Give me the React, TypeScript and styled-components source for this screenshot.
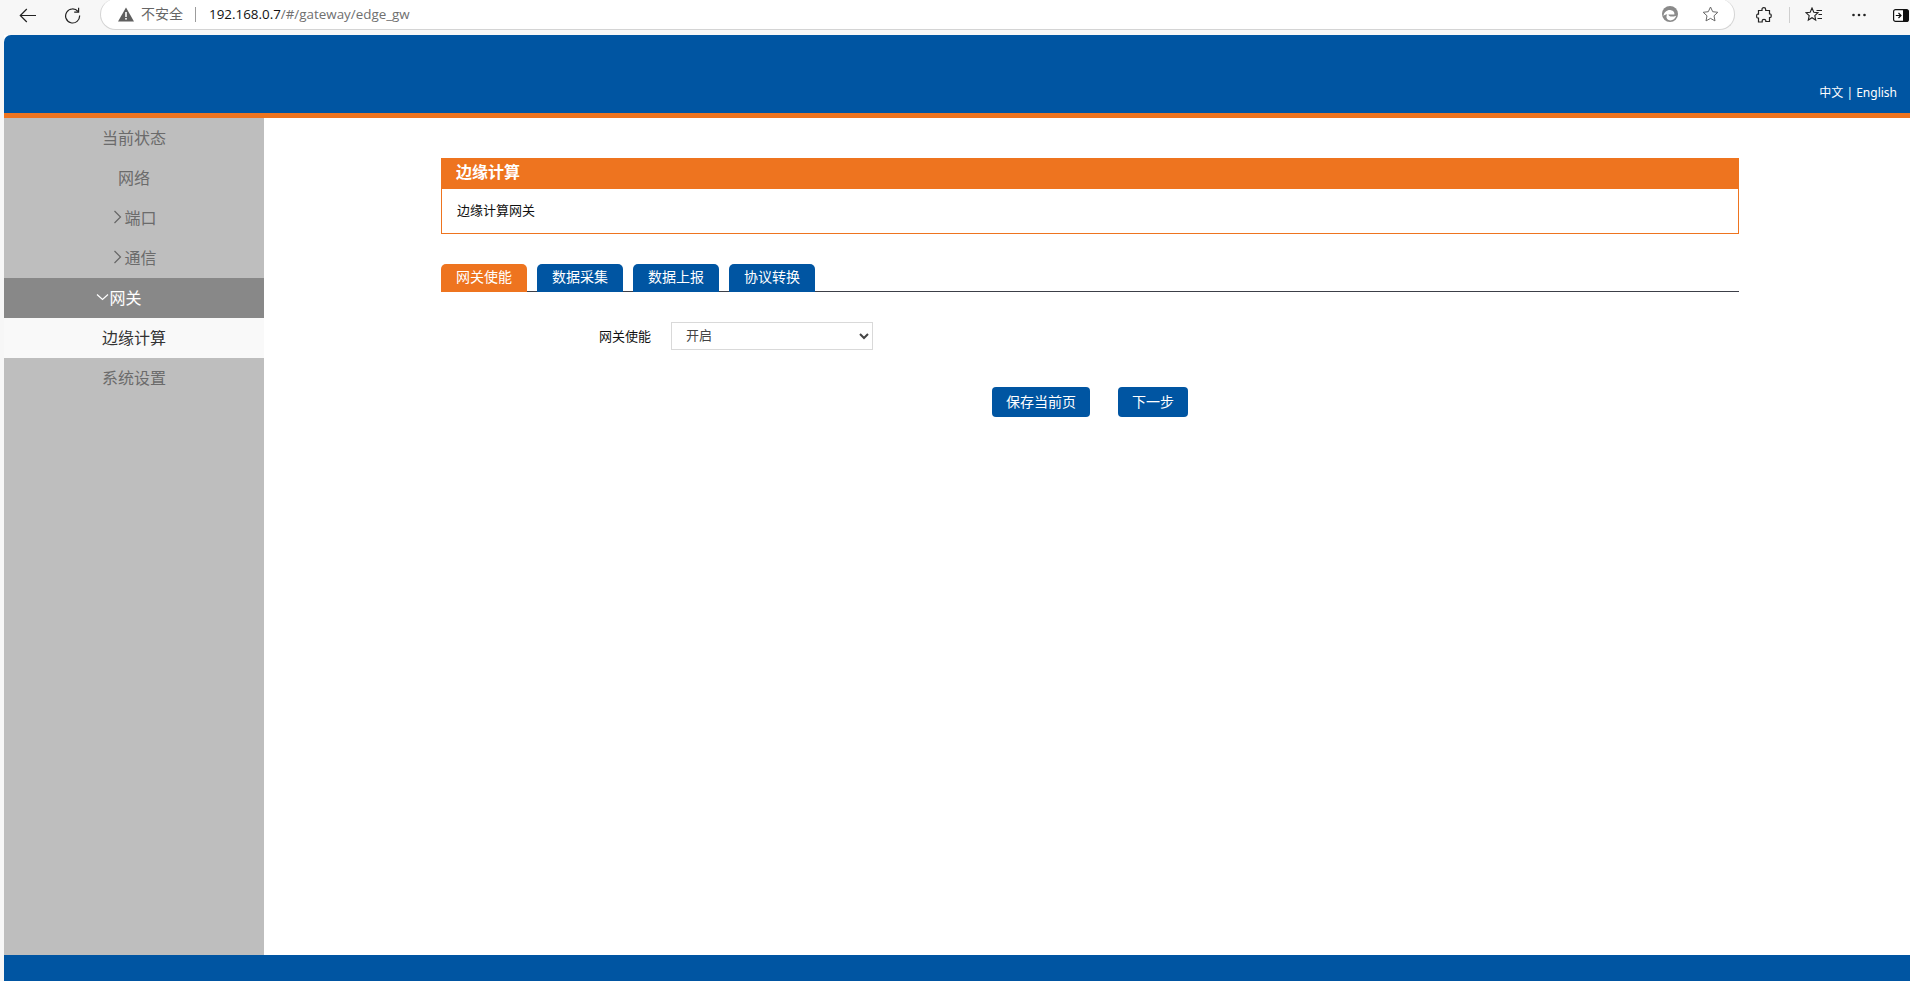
import React from 'react';
import styled, { createGlobalStyle } from 'styled-components';

const GlobalStyle = createGlobalStyle`
  html, body { margin: 0; padding: 0; height: 100%; background: #fff; }
  body { font-family: "Noto Sans", "Noto Sans CJK SC", sans-serif; overflow: hidden; }
  * { box-sizing: border-box; }
`;

const Viewport = styled.div`
  width: 1910px;
  height: 981px;
  display: flex;
  flex-direction: column;
  background: #f7f7f7;
  overflow: hidden;
`;

const BrowserBar = styled.div`
  height: 35px;
  flex: none;
  display: flex;
  align-items: flex-start;
  padding-left: 19px;
  background: #f7f7f7;
`;

const NavButton = styled.div<{ $w: number }>`
  width: ${p => p.$w}px;
  height: 30px;
  flex: none;
  display: flex;
  align-items: center;
  svg { display: block; }
`;

const AddressPill = styled.div`
  width: 1635px;
  height: 31px;
  margin-top: -1px;
  flex: none;
  display: flex;
  align-items: center;
  background: #fff;
  border: 1px solid #d4d4d4;
  border-top: none;
  border-radius: 16px;
  padding: 0 15px 0 17px;
  font-size: 13px;
`;

const Insecure = styled.span`
  color: #666;
  font-size: 14px;
  margin-left: 7px;
  margin-right: 1px;
  line-height: 18px;
`;

const Divider = styled.span`
  width: 1px;
  height: 15px;
  background: #9c9c9c;
  margin: 0 13px 0 11px;
`;

const Host = styled.span`
  color: #111;
  font-family: "Open Sans", sans-serif;
  font-size: 13.4px;
`;

const UrlPath = styled.span`
  color: #6f6f6f;
  font-family: "Open Sans", sans-serif;
  font-size: 13.4px;
`;

const PillEnd = styled.div`
  margin-left: auto;
  display: flex;
  align-items: center;
  gap: 24px;
  svg { display: block; }
`;

const Tools = styled.div`
  flex: none;
  height: 30px;
  display: flex;
  align-items: center;
  margin-left: 21px;
  svg { display: block; }
`;

const ToolSep = styled.span`
  width: 1px;
  height: 16px;
  background: #cfcfcf;
  margin: 0 15px 0 17px;
`;

const DotsSlot = styled.span`
  margin-left: 29px;
`;

const PaneSlot = styled.span`
  margin-left: 27px;
`;

const Page = styled.div`
  flex: 1;
  min-height: 0;
  margin-left: 4px;
  display: flex;
  flex-direction: column;
  background: #fff;
`;

const Header = styled.header`
  height: 83px;
  flex: none;
  display: flex;
  align-items: flex-end;
  justify-content: flex-end;
  padding: 0 13px 12px 0;
  background: #0055a2;
  border-bottom: 5px solid #ee741f;
  border-top-left-radius: 7px;
  color: #fff;
  font-size: 12px;
  line-height: 17px;
`;

const Body = styled.div`
  flex: 1;
  min-height: 0;
  display: flex;
`;

const Sidebar = styled.nav`
  width: 260px;
  flex: none;
  background: #bebebe;
`;

const NavRow = styled.div<{ $state?: 'open' | 'current' }>`
  height: 40px;
  display: flex;
  align-items: center;
  justify-content: center;
  padding-bottom: 2px;
  padding-right: ${p => (p.$state === 'open' ? 30 : 0)}px;
  font-size: 16px;
  color: ${p => (p.$state === 'open' ? '#fff' : p.$state === 'current' ? '#333' : '#6b6b6b')};
  background: ${p => (p.$state === 'open' ? '#888888' : p.$state === 'current' ? '#f9f9f9' : 'transparent')};
  svg { display: block; flex: none; }
`;

const Main = styled.main`
  flex: 1;
  min-width: 0;
  padding: 40px 171px 0 177px;
`;

const InfoBox = styled.section`
  border: 1px solid #ee741f;
  height: 76px;
`;

const InfoTitle = styled.h2`
  margin: 0;
  height: 30px;
  padding-left: 14px;
  background: #ee741f;
  color: #fff;
  font-size: 16px;
  font-weight: 700;
  line-height: 27px;
`;

const InfoText = styled.p`
  margin: 0;
  padding-left: 15px;
  font-size: 13px;
  line-height: 42px;
  color: #111;
`;

const TabBar = styled.div`
  margin-top: 30px;
  height: 28px;
  display: flex;
  gap: 10px;
  border-bottom: 1px solid #3c3f48;
`;

const Tab = styled.div<{ $active?: boolean }>`
  width: 86px;
  height: 28px;
  border-radius: 5px 5px 0 0;
  background: ${p => (p.$active ? '#ee741f' : '#0055a2')};
  color: #fff;
  font-size: 14px;
  line-height: 26px;
  text-align: center;
`;

const FormRow = styled.div`
  margin-top: 30px;
  display: flex;
  align-items: center;
  padding-left: 158px;
`;

const FieldLabel = styled.label`
  width: 52px;
  font-size: 13px;
  color: #111;
  margin-right: 20px;
  text-align: right;
  padding-bottom: 2px;
`;

const Select = styled.select`
  width: 202px;
  height: 28px;
  padding-left: 10px;
  padding-bottom: 2px;
  border: 1px solid #d9d9d9;
  border-radius: 0;
  background: #fff;
  color: #444;
  font-family: inherit;
  font-size: 13px;
  outline: none;
`;

const Actions = styled.div`
  margin-top: 37px;
  padding-left: 551px;
  display: flex;
  gap: 28px;
`;

const ActionButton = styled.button<{ $w: number }>`
  width: ${p => p.$w}px;
  height: 30px;
  padding: 0 0 2px;
  border: none;
  border-radius: 4px;
  background: #0055a2;
  color: #fff;
  font-family: inherit;
  font-size: 14px;
`;

const Footer = styled.footer`
  height: 26px;
  flex: none;
  background: #0055a2;
`;

const Chevron = ({ dir, color }: { dir: 'right' | 'down'; color: string }) => (
  <svg width="13" height="14" viewBox="0 0 13 14" fill="none" stroke={color} strokeWidth="1.2">
    {dir === 'right' ? <path d="M3.5 1 9.5 7l-6 6" /> : <path d="M1 4.5 6.5 9.5 12 4.5" />}
  </svg>
);

export default function App() {
  return (
    <Viewport>
      <GlobalStyle />
      <BrowserBar>
        <NavButton $w={45}>
          <svg width="17" height="15" viewBox="0 0 17 15" fill="none" stroke="#222" strokeWidth="1.2">
            <path d="M17 7.5H1.5M7.8 1 1.3 7.5 7.8 14" />
          </svg>
        </NavButton>
        <NavButton $w={36}>
          <svg width="17" height="17" viewBox="0 0 17 17" fill="none" stroke="#222" strokeWidth="1.2">
            <path d="M14 4.500A7 7 0 1 0 15.600 8.500" />
            <path d="M14.600 .8v4.400h-4.400" />
          </svg>
        </NavButton>
        <AddressPill>
          <svg width="16" height="15" viewBox="0 0 16 15">
            <path d="M8 0.5 16 14.5H0Z" fill="#5f5f5f" />
            <rect x="7.2" y="5" width="1.6" height="5" fill="#fff" />
            <rect x="7.2" y="11" width="1.6" height="1.6" fill="#fff" />
          </svg>
          <Insecure>不安全</Insecure>
          <Divider />
          <Host>192.168.0.7</Host>
          <UrlPath>/#/gateway/edge_gw</UrlPath>
          <PillEnd>
            <svg width="16" height="16" viewBox="0 0 16 16">
              <circle cx="8" cy="8" r="8" fill="#8a8a8a" />
              <path d="M1.500 10C1.800 6 5.500 3.500 9 4.200c2.400.5 3.800 2.200 3.400 4.200H6.400c.1 1.800 3 3.200 7.800 1.300-1.200 3.800-4.800 5.500-7.700 4.300C4.300 13 3.800 10.300 5.300 8.300 3.800 8.300 2.500 9 1.500 10Z" fill="#fff" />
            </svg>
            <svg width="17" height="16" viewBox="0 0 17 16" fill="none" stroke="#6a6a6a" strokeWidth="1">
              <path d="M8.500 1 10.700 5.700 15.800 6.300 12 9.800 13 14.900 8.500 12.400 4 14.900 5 9.800 1.200 6.300 6.300 5.700Z" />
            </svg>
          </PillEnd>
        </AddressPill>
        <Tools>
          <svg width="16" height="16" viewBox="0 0 16 16" fill="none" stroke="#222" strokeWidth="1.2">
            <path d="M6 2.200C6 1 7 .7 7.800 .7S9.700 1.200 9.700 2.500V3.500H13.500V7H14.500C15.500 7 15.500 10.500 14.500 10.500H13.500V14.500H9.800V13.500C9.800 12 6.200 12 6.200 13.500V15H2.500V11H1.500C.3 11 .3 7.200 1.500 7.200H2.500V3.500H6Z" />
          </svg>
          <ToolSep />
          <svg width="18" height="16" viewBox="0 0 18 16" fill="none" stroke="#222" strokeWidth="1.1">
            <path d="M7 1 8.800 5.200 13 5.600 9.800 8.600 10.700 13 7 10.700 3.300 13 4.200 8.600 1 5.600 5.200 5.200Z" />
            <path d="M11.500 3.500H17M13.500 7.500H17M12.500 11.500H17" />
          </svg>
          <DotsSlot>
            <svg width="14" height="4" viewBox="0 0 14 4" fill="#222">
              <circle cx="1.500" cy="2" r="1.300" />
              <circle cx="7" cy="2" r="1.300" />
              <circle cx="12.500" cy="2" r="1.300" />
            </svg>
          </DotsSlot>
          <PaneSlot>
            <svg width="16" height="13" viewBox="0 0 16 13">
              <rect x=".6" y=".6" width="14.800" height="11.800" rx="2" fill="#fff" stroke="#111" strokeWidth="1.2" />
              <path d="M10 .6h3.500a2 2 0 0 1 2 2v8a2 2 0 0 1-2 2H10Z" fill="#111" />
              <path d="M2.800 6.500H7.800M5.500 4l2.500 2.500L5.500 9" stroke="#111" strokeWidth="1.2" fill="none" />
            </svg>
          </PaneSlot>
        </Tools>
      </BrowserBar>
      <Page>
        <Header>中文 | English</Header>
        <Body>
          <Sidebar>
            <NavRow>当前状态</NavRow>
            <NavRow>网络</NavRow>
            <NavRow><Chevron dir="right" color="#666" />端口</NavRow>
            <NavRow><Chevron dir="right" color="#666" />通信</NavRow>
            <NavRow $state="open"><Chevron dir="down" color="#fff" />网关</NavRow>
            <NavRow $state="current">边缘计算</NavRow>
            <NavRow>系统设置</NavRow>
          </Sidebar>
          <Main>
            <InfoBox>
              <InfoTitle>边缘计算</InfoTitle>
              <InfoText>边缘计算网关</InfoText>
            </InfoBox>
            <TabBar>
              <Tab $active>网关使能</Tab>
              <Tab>数据采集</Tab>
              <Tab>数据上报</Tab>
              <Tab>协议转换</Tab>
            </TabBar>
            <FormRow>
              <FieldLabel>网关使能</FieldLabel>
              <Select defaultValue="on">
                <option value="on">开启</option>
                <option value="off">关闭</option>
              </Select>
            </FormRow>
            <Actions>
              <ActionButton $w={98}>保存当前页</ActionButton>
              <ActionButton $w={70}>下一步</ActionButton>
            </Actions>
          </Main>
        </Body>
        <Footer />
      </Page>
    </Viewport>
  );
}
